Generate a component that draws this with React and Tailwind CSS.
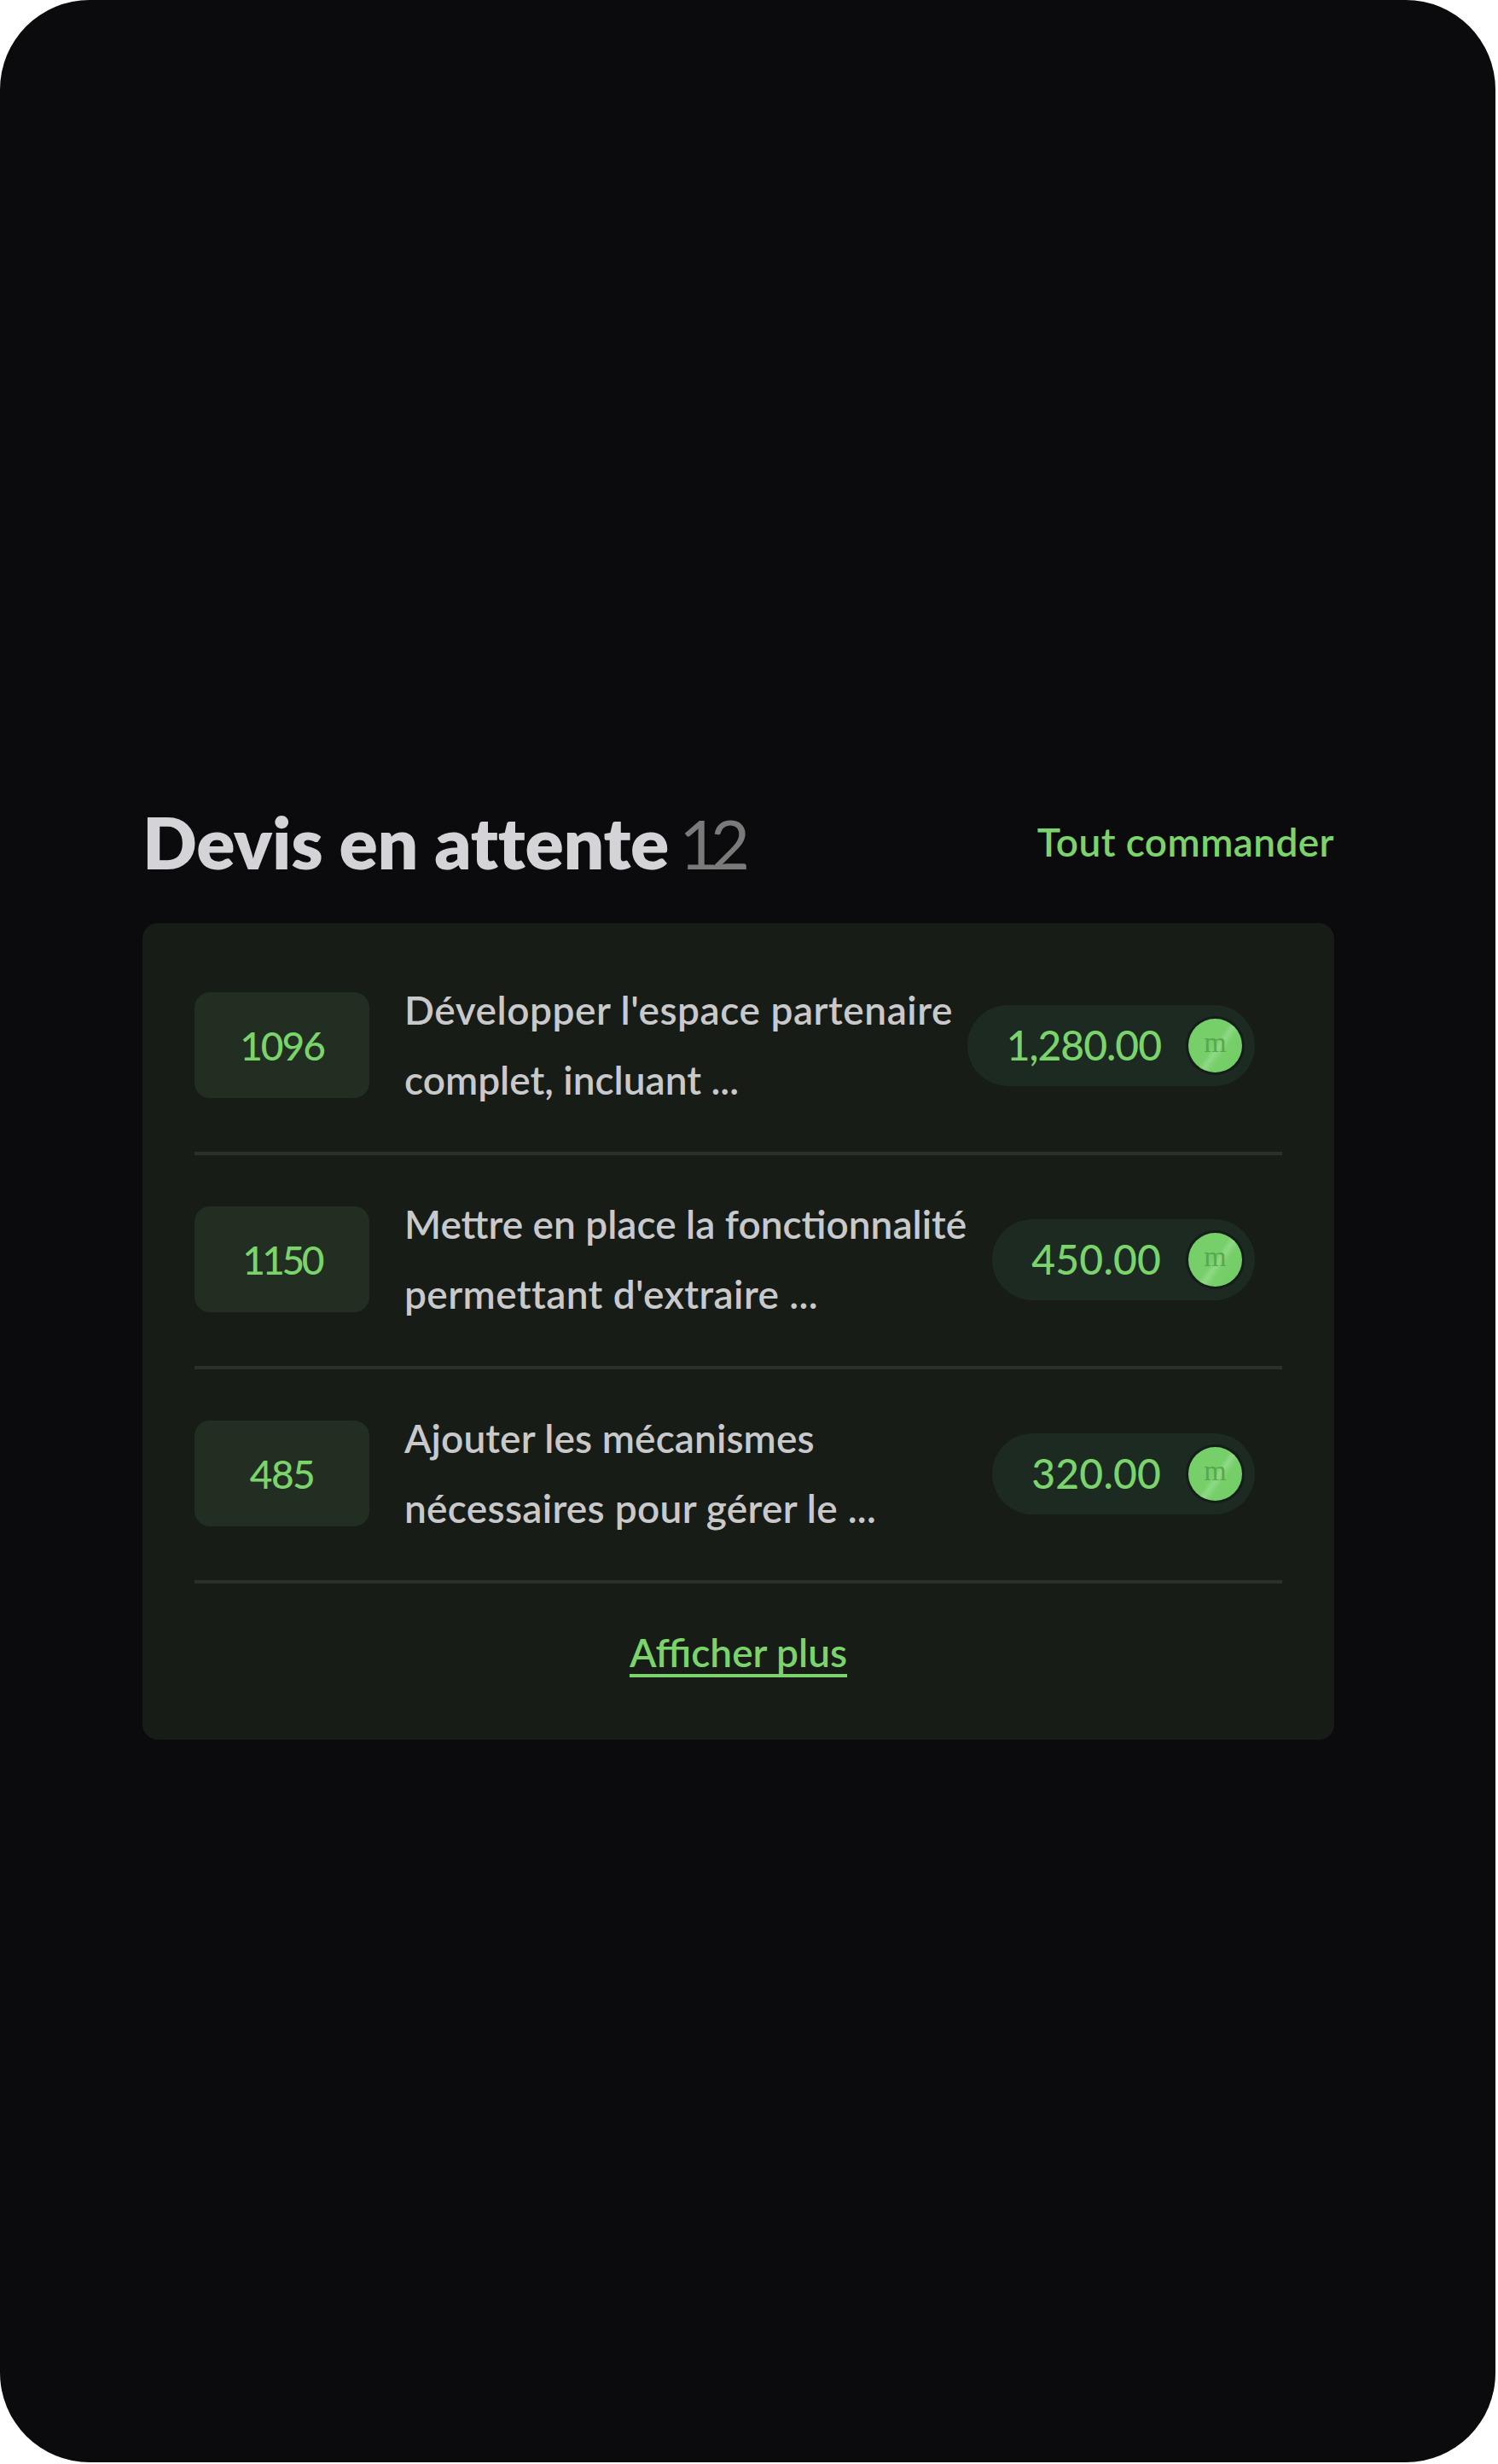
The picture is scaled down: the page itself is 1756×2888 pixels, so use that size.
const rows = [
  {
    id: "1096",
    idTrack: "tracking-[-2px]",
    l1: "Développer l'espace partenaire",
    l1Track: "tracking-[0.55px]",
    l2: "complet, incluant ...",
    l2Track: "tracking-[0px]",
    amount: "1,280.00",
    amountTrack: "tracking-[-1px]",
  },
  {
    id: "1150",
    idTrack: "tracking-[-3.5px]",
    l1: "Mettre en place la fonctionnalité",
    l1Track: "tracking-[0px]",
    l2: "permettant d'extraire ...",
    l2Track: "tracking-[0.4px]",
    amount: "450.00",
    amountTrack: "tracking-[0.2px]",
  },
  {
    id: "485",
    idTrack: "tracking-[-1.5px]",
    l1: "Ajouter les mécanismes",
    l1Track: "tracking-[0.1px]",
    l2: "nécessaires pour gérer le ...",
    l2Track: "tracking-[0.3px]",
    amount: "320.00",
    amountTrack: "tracking-[0.2px]",
  },
];

function Coin() {
  return (
    <div className="relative flex h-[63px] w-[63px] shrink-0 items-center justify-center overflow-hidden rounded-full bg-[linear-gradient(125deg,#76cf69_0%,#76cf69_48%,#8fd985_55%,#76cf69_64%,#72cc65_100%)] font-['Liberation_Serif',serif] text-[34px] leading-none text-[#58a850] shadow-[0_0_0_3px_#141d18]">
      <span className="-mt-[6px]">m</span>
    </div>
  );
}

function Row({ row }) {
  return (
    <div className="flex items-center">
      <div className={`flex h-[124px] w-[205px] shrink-0 items-center justify-center rounded-[18px] bg-[#222e22] text-[46px] font-medium text-[#7bd36c] ${row.idTrack}`}>
        {row.id}
      </div>
      <div className="ml-[41px] min-w-0 flex-1 whitespace-nowrap text-[46px] font-semibold leading-[82px] text-[#c9c9cc]">
        <div className={row.l1Track}>{row.l1}</div>
        <div className={row.l2Track}>{row.l2}</div>
      </div>
      <div className="mr-[32px] flex h-[95px] shrink-0 items-center gap-[32px] rounded-full bg-[#1c2a21] pl-[46px] pr-[15px]">
        <span className={`text-[48px] font-medium text-[#7bd36c] ${row.amountTrack}`}>{row.amount}</span>
        <Coin />
      </div>
    </div>
  );
}

export default function App() {
  return (
    <div className="h-[2888px] w-[1756px] bg-white font-['Lato','Noto_Sans',sans-serif]">
      <div className="h-[2886px] w-[1753px] rounded-[105px] bg-[#0b0b0d] pl-[167px] pt-[938px]">
        <div className="w-[1397px]">
          <div className="mb-[41px] flex h-[103px] items-center justify-between pb-[6px]">
            <h1 className="text-[84px] font-extrabold leading-none tracking-[-0.25px] text-[#d4d4d8]">
              Devis en attente <span className="-ml-[7px] text-[80px] font-normal tracking-[-10px] text-[#7a7a7a]">12</span>
            </h1>
            <span className="text-[46px] font-semibold tracking-[0.4px] text-[#7bd36c]">Tout commander</span>
          </div>
          <div className="flex flex-col gap-[40px] rounded-[18px] bg-[#171c16] p-[61px]">
            {rows.map((row) => (
              <div key={row.id} className="flex flex-col gap-[43px]">
                <Row row={row} />
                <div className="h-[4px] bg-[#2a302b]" />
              </div>
            ))}
            <div className="text-center text-[46px] font-semibold leading-[82px] text-[#7bd36c] underline decoration-[4px] underline-offset-[8px]">
              Afficher plus
            </div>
          </div>
        </div>
      </div>
    </div>
  );
}
